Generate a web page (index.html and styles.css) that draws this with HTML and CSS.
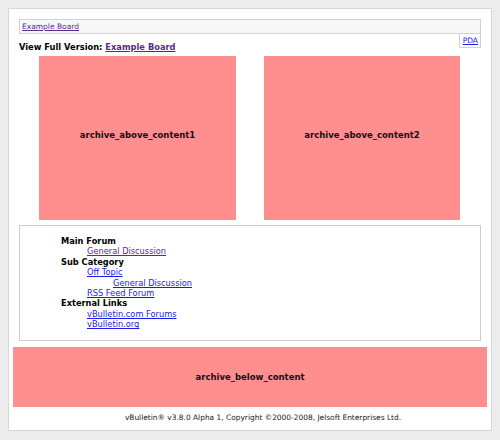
FILE: index.html
```html
<!DOCTYPE html>
<html>
<head>
<meta charset="utf-8">
<title>Example Board</title>
<link rel="stylesheet" href="styles.css">
</head>
<body>
<div class="page">
  <div class="navbar"><a class="visited" href="#">Example Board</a></div>
  <div class="pda"><a href="#">PDA</a></div>
  <div class="fullversion">View Full Version: <a class="visited" href="#">Example Board</a></div>
  <div class="ads">
    <div class="ad ad-left">archive_above_content1</div>
    <div class="ad ad-right">archive_above_content2</div>
  </div>
  <div class="forumlist">
    <div class="cat">Main Forum</div>
    <div class="lvl1"><a class="visited" href="#">General Discussion</a></div>
    <div class="cat">Sub Category</div>
    <div class="lvl1"><a href="#">Off Topic</a></div>
    <div class="lvl2"><a href="#">General Discussion</a></div>
    <div class="lvl1"><a href="#">RSS Feed Forum</a></div>
    <div class="cat">External Links</div>
    <div class="lvl1"><a href="#">vBulletin.com Forums</a></div>
    <div class="lvl1"><a href="#">vBulletin.org</a></div>
  </div>
  <div class="below">archive_below_content</div>
  <div class="footer">vBulletin® v3.8.0 Alpha 1, Copyright ©2000-2008, Jelsoft Enterprises Ltd.</div>
</div>
</body>
</html>
```
FILE: styles.css
```css
html, body {
  margin: 0;
  padding: 0;
}
body {
  background: #ececec;
  font-family: "DejaVu Sans", Verdana, sans-serif;
  color: #000;
}
a {
  color: #1a1aee;
  text-decoration: underline;
}
a.visited {
  color: #5a2a92;
}
.page {
  margin: 8px;
  background: #fff;
  border: 1px solid #d6d6d6;
  padding: 10px 10px 7px 10px;
}
.navbar {
  border: 1px solid #d2d2d2;
  background: #f7f7f7;
  padding-left: 2px;
  font-size: 7.5px;
  line-height: 13px;
  height: 13px;
}
.pda {
  float: right;
  border: 1px solid #d2d2d2;
  border-top: 0;
  padding: 0 2px 0 3px;
  font-size: 7.5px;
  line-height: 13px;
}
.fullversion {
  padding-top: 6px;
  font-size: 8.3px;
  line-height: 14px;
  font-weight: bold;
}
.ads {
  display: flex;
  gap: 28px;
  padding-left: 20px;
  margin-top: 2px;
}
.ad {
  height: 158px;
  padding-bottom: 6px;
  background: #ff8f8f;
  display: flex;
  align-items: center;
  justify-content: center;
  font-size: 8.5px;
  font-weight: bold;
  color: #111;
}
.ad-left {
  width: 197px;
}
.ad-right {
  width: 196px;
}
.forumlist {
  margin-top: 5px;
  border: 1px solid #cccccc;
  padding: 10px 0 10.4px 41px;
  font-size: 8.25px;
  line-height: 10.4px;
}
.cat {
  font-weight: bold;
}
.lvl1 {
  padding-left: 26px;
}
.lvl2 {
  padding-left: 52px;
}
.below {
  margin: 6px -6px 0 -6px;
  height: 60px;
  background: #ff8f8f;
  display: flex;
  align-items: center;
  justify-content: center;
  font-size: 8.5px;
  font-weight: bold;
  color: #111;
}
.footer {
  padding-top: 5px;
  padding-left: 26px;
  text-align: center;
  font-size: 7.45px;
  line-height: 11px;
  color: #222;
}
```
